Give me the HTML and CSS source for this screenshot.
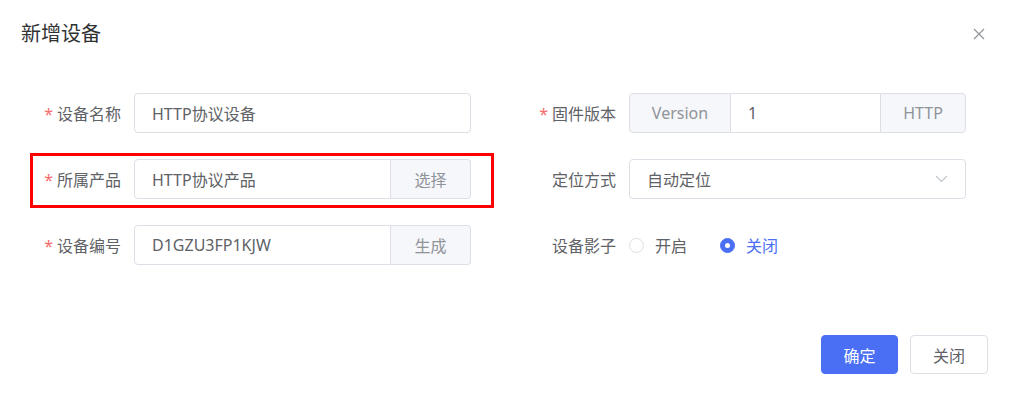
FILE: index.html
```html
<!DOCTYPE html>
<html lang="zh-CN">
<head>
<meta charset="utf-8">
<title>新增设备</title>
<link rel="stylesheet" href="styles.css">
</head>
<body>
<div class="dialog">
  <div class="header">
    <span class="title">新增设备</span>
    <span class="close" aria-label="关闭">
      <svg width="12" height="12" viewBox="0 0 12 12"><path d="M1 1L11 11M11 1L1 11" stroke="#909399" stroke-width="1.2" fill="none"/></svg>
    </span>
  </div>
  <div class="form">
    <div class="item">
      <label class="label"><span class="req">*</span>设备名称</label>
      <div class="control">
        <div class="input"><span class="val">HTTP协议设备</span></div>
      </div>
    </div>
    <div class="item">
      <label class="label"><span class="req">*</span>固件版本</label>
      <div class="control group">
        <span class="addon pre">Version</span>
        <div class="input mid"><span class="val">1</span></div>
        <span class="addon post">HTTP</span>
      </div>
    </div>
    <div class="item marked">
      <label class="label"><span class="req">*</span>所属产品</label>
      <div class="control group">
        <div class="input left"><span class="val">HTTP协议产品</span></div>
        <span class="addon btn">选择</span>
      </div>
      <span class="mark"></span>
    </div>
    <div class="item">
      <label class="label">定位方式</label>
      <div class="control">
        <div class="input select"><span class="val">自动定位</span>
          <svg class="chev" width="13" height="8" viewBox="0 0 13 8"><path d="M1 1L6.5 6.5L12 1" stroke="#c0c4cc" stroke-width="1.1" fill="none"/></svg>
        </div>
      </div>
    </div>
    <div class="item">
      <label class="label"><span class="req">*</span>设备编号</label>
      <div class="control group">
        <div class="input left"><span class="val">D1GZU3FP1KJW</span></div>
        <span class="addon btn">生成</span>
      </div>
    </div>
    <div class="item">
      <label class="label">设备影子</label>
      <div class="control radios">
        <span class="radio"><span class="dot"></span><span class="rtext">开启</span></span>
        <span class="radio on"><span class="dot"></span><span class="rtext">关闭</span></span>
      </div>
    </div>
  </div>
  <div class="footer">
    <span class="button primary">确定</span>
    <span class="button">关闭</span>
  </div>
</div>
</body>
</html>
```
FILE: styles.css
```css
* { box-sizing: border-box; }
html, body {
  margin: 0;
  padding: 0;
  background: #fff;
}
body {
  font-family: "Noto Sans", "Noto Sans CJK SC", sans-serif;
  color: #606266;
  font-size: 16px;
}
.dialog {
  width: 1009px;
  height: 397px;
  display: flex;
  flex-direction: column;
}
.header {
  display: flex;
  align-items: center;
  justify-content: space-between;
  padding: 20px 24px 0 21px;
  height: 48px;
}
.title {
  font-size: 20px;
  line-height: 28px;
  color: #303133;
}
.close {
  display: flex;
  width: 12px;
  height: 12px;
}
.form {
  display: grid;
  grid-template-columns: 437px 437px;
  column-gap: 58px;
  row-gap: 26px;
  padding: 45px 0 0 34px;
}
.item {
  display: flex;
  align-items: center;
  height: 40px;
}
.item.marked { position: relative; }
.mark {
  position: absolute;
  top: -6px;
  left: -4px;
  right: -23px;
  bottom: -9px;
  border: 3px solid #ff0000;
  pointer-events: none;
}
.label {
  width: 100px;
  flex: none;
  text-align: right;
  padding-right: 13px;
  color: #606266;
  font-size: 16px;
}
.req {
  color: #f56c6c;
  margin-right: 4px;
}
.control {
  flex: 1;
  height: 40px;
  display: flex;
}
.input {
  flex: 1;
  height: 40px;
  border: 1px solid #dcdfe6;
  border-radius: 4px;
  display: flex;
  align-items: center;
  padding: 0 15px 0 17px;
  color: #606266;
}
.input.mid { border-radius: 0; border-left: none; border-right: none; }
.input.left { border-radius: 4px 0 0 4px; }
.input.select {
  justify-content: space-between;
  padding-left: 17px;
  padding-right: 17px;
}
.addon {
  height: 40px;
  display: flex;
  align-items: center;
  justify-content: center;
  background: #f5f7fa;
  border: 1px solid #dcdfe6;
  color: #909399;
  flex: none;
}
.addon.pre { width: 102px; border-radius: 4px 0 0 4px; }
.addon.post { width: 86px; border-radius: 0 4px 4px 0; }
.addon.btn { width: 80px; border-left: none; border-radius: 0 4px 4px 0; }
.radios {
  align-items: center;
  padding-left: 0;
  gap: 33px;
}
.radio {
  display: flex;
  align-items: center;
  gap: 11px;
}
.dot {
  width: 15px;
  height: 15px;
  border-radius: 50%;
  border: 1px solid #dcdfe6;
  background: #fff;
  display: flex;
  align-items: center;
  justify-content: center;
}
.radio.on .dot {
  background: #4a6ff5;
  border-color: #4a6ff5;
}
.radio.on .dot::after {
  content: "";
  width: 5px;
  height: 5px;
  border-radius: 50%;
  background: #fff;
}
.radio.on .rtext { color: #4a6ff5; }
.footer {
  margin-top: auto;
  display: flex;
  justify-content: flex-end;
  gap: 12px;
  padding: 0 21px 23px 0;
}
.button {
  width: 78px;
  height: 39px;
  display: flex;
  align-items: center;
  justify-content: center;
  border: 1px solid #dcdfe6;
  border-radius: 4px;
  color: #606266;
  font-size: 16px;
}
.button.primary {
  width: 77px;
  background: #4a6ff5;
  border-color: #4a6ff5;
  color: #fff;
}
```
